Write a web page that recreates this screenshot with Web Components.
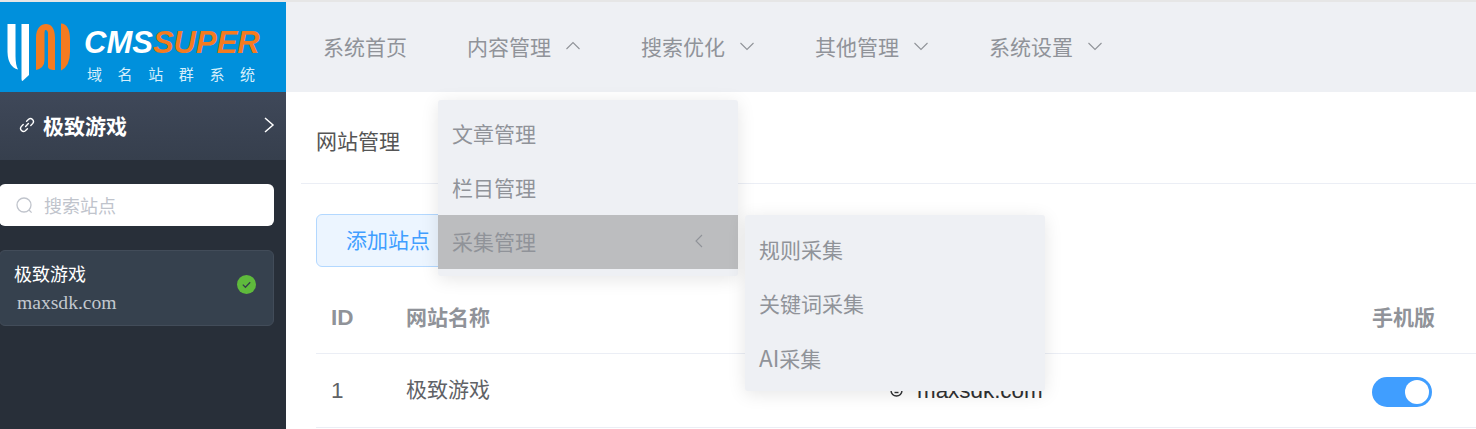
<!DOCTYPE html>
<html lang="zh-CN">
<head>
<meta charset="utf-8">
<title>CMSSUPER 域名站群系统</title>
<style>
html, body { margin: 0; height: 100%; overflow: hidden; background: #fff; }
body { font-family: "Liberation Sans", "Noto Sans CJK SC", sans-serif; }
</style>
</head>
<body>

<cms-shell>
  <brand-logo slot="logo"></brand-logo>
  <site-sidebar slot="side" current="极致游戏">
    <site-card name="极致游戏" domain="maxsdk.com"></site-card>
  </site-sidebar>
  <top-nav slot="nav">
    <nav-item label="系统首页" plain></nav-item>
    <nav-item label="内容管理" open>
      <fly-menu>
        <menu-entry>文章管理</menu-entry>
        <menu-entry>栏目管理</menu-entry>
        <menu-entry active>采集管理
          <fly-menu slot="sub" flat>
            <menu-entry>规则采集</menu-entry>
            <menu-entry>关键词采集</menu-entry>
            <menu-entry><span style="font-size:22.5px">AI</span>采集</menu-entry>
          </fly-menu>
        </menu-entry>
      </fly-menu>
    </nav-item>
    <nav-item label="搜索优化"></nav-item>
    <nav-item label="其他管理"></nav-item>
    <nav-item label="系统设置"></nav-item>
  </top-nav>
  <site-page slot="main" heading="网站管理" action="添加站点">
    <site-table></site-table>
  </site-page>
</cms-shell>

<script>
"use strict";

/* Small helper, every element here just sets its shadow root from a string. */
function shadow(el, html) {
    el.attachShadow({mode: 'open'});
    el.shadowRoot.innerHTML = html;
}

const chevron = (d) => `<svg width="16" height="16" viewBox="0 0 16 16" fill="none" stroke="currentColor" stroke-width="1.1"><path d="${d}"/></svg>`;

class CmsShell extends HTMLElement {
    constructor() {
        super();
        shadow(this, `
<style>
:host { display: block; height: 429px; overflow: hidden; border-top: 2px solid #e6e6e6; box-sizing: border-box; }
.grid { display: grid; grid-template-columns: 286px 1fr; grid-template-rows: 90px 1fr; height: 100%; }
.side { grid-row: 2; overflow: hidden; }
.main { position: relative; overflow: hidden; }
.nav { position: relative; z-index: 5; }
</style>
<div class="grid">
  <div><slot name="logo"></slot></div>
  <div class="nav"><slot name="nav"></slot></div>
  <div class="side"><slot name="side"></slot></div>
  <div class="main"><slot name="main"></slot></div>
</div>`);
    }
}

class BrandLogo extends HTMLElement {
    constructor() {
        super();
        shadow(this, `
<style>
:host { display: flex; height: 90px; background: #0090dc; align-items: flex-start; overflow: hidden; }
svg { flex: none; }
.words { margin: 25px 0 0 13px; }
.name { font: italic bold 31px/31px "Liberation Sans", sans-serif; color: #fff; }
.name span { color: #f57b20; }
.sub { margin: 6px 0 0 3px; font: 15px/20px "Noto Sans CJK SC", sans-serif; letter-spacing: 15.6px; color: #d5eefb; white-space: nowrap; }
</style>
<svg width="71" height="90" viewBox="0 2 71 90">
  <path fill="#fff" d="M7.5 24 H15.500 V56 Q15.500 65 18 69.500 Q8 67 7.500 52 Z"/>
  <path fill="#fff" d="M21.500 24 H29 V75 L22.500 81 Q21.500 81 21.500 79 Z"/>
  <path fill="#f57b20" d="M36 70 V38 C36 28 41 24 46 24 C51 24 55 28 55 38 V70 C50 70 48.500 69 48 67 V34 Q48 30 45.500 30 Q44.500 30 44.500 34 V60 Q44.500 68 36 70 Z"/>
  <path fill="#f57b20" d="M61 23.500 Q70 24 70 40 V52 Q70 66 61 70.500 Z"/>
</svg>
<div class="words">
  <div class="name">CMS<span>SUPER</span></div>
  <div class="sub">域名站群系统</div>
</div>`);
    }
}

class SiteSidebar extends HTMLElement {
    constructor() {
        super();
        shadow(this, `
<style>
:host { display: block; height: 100%; background: #282f39; font-family: "Noto Sans CJK SC", sans-serif; }
.head { display: flex; align-items: center; height: 68px; padding: 0 8px 2px 19px; gap: 8px; box-sizing: border-box;
        background: linear-gradient(#3f4859, #363f4d); color: #fff; font-weight: 700; font-size: 21px; }
.head span { flex: 1; }
.search { display: flex; align-items: center; gap: 11px; height: 42px; margin: 24px 12px 0 -1px; padding-left: 17px; box-sizing: border-box;
          background: #fff; border-radius: 6px; color: #c0c4cc; font-size: 18px; }
.list { margin: 24px 12px 0 -1px; }
svg { flex: none; }
</style>
<div class="head">
  <svg width="16" height="16" viewBox="0 0 16 16" fill="none" stroke="#fff" stroke-width="1.4" stroke-linecap="round">
    <path d="M6.600 9.400 9.400 6.600"/>
    <path d="M7.600 4.200 9.600 2.200a3 3 0 0 1 4.200 4.200l-2 2"/>
    <path d="M8.400 11.800 6.400 13.800a3 3 0 0 1-4.200-4.200l2-2"/>
  </svg>
  <span></span>
  <svg width="16" height="20" viewBox="0 0 16 20" fill="none" stroke="#fff" stroke-width="1.5"><path d="M3 3l8 7-8 7"/></svg>
</div>
<div class="search">
  <svg width="17" height="17" viewBox="0 0 17 17" fill="none" stroke="#c0c4cc" stroke-width="1.3"><circle cx="8" cy="8" r="7"/><path d="M13 13l2.600 2.600"/></svg>
  搜索站点
</div>
<div class="list"><slot></slot></div>`);
        this.shadowRoot.querySelector('.head span').textContent = this.getAttribute('current');
    }
}

class SiteCard extends HTMLElement {
    constructor() {
        super();
        shadow(this, `
<style>
:host { display: flex; align-items: center; justify-content: space-between; height: 76px; padding: 0 17px 0 14px; box-sizing: border-box;
        background: #36414e; border: 1px solid #424c59; border-radius: 6px; }
.name { font: 18px/24px "Noto Sans CJK SC", sans-serif; color: #fff; margin-top: -1px; }
.domain { font: 19.6px/24px "Liberation Serif", serif; color: #c3c8cf; margin: 6px 0 0 3px; }
svg { margin-bottom: 8px; }
</style>
<div>
  <div class="name"></div>
  <div class="domain"></div>
</div>
<svg width="19" height="19" viewBox="0 0 19 19"><circle cx="9.500" cy="9.500" r="9.500" fill="#5fba3c"/><path d="M5.800 9.600l2.600 2.600 4.800-5" fill="none" stroke="#33404a" stroke-width="1.3"/></svg>`);
        this.shadowRoot.querySelector('.name').textContent = this.getAttribute('name');
        this.shadowRoot.querySelector('.domain').textContent = this.getAttribute('domain');
    }
}

class TopNav extends HTMLElement {
    constructor() {
        super();
        shadow(this, `
<style>
:host { display: flex; height: 90px; padding-left: 7px; background: #eef0f4; }
</style>
<slot></slot>`);
    }
}

class NavItem extends HTMLElement {
    constructor() {
        super();
        const open = this.hasAttribute('open');
        const plain = this.hasAttribute('plain');
        const icon = plain ? '' : chevron(open ? 'M1.500 11 8 4.500 14.500 11' : 'M1.500 5 8 11.500 14.500 5');
        shadow(this, `
<style>
:host { display: flex; align-items: center; gap: 14px; height: 90px; box-sizing: border-box; padding: 0 30px 3px 30px; position: relative;
        color: #909399; font: 21px "Noto Sans CJK SC", sans-serif; white-space: nowrap; }
.drop { position: absolute; left: 1px; top: 98px; }
svg { flex: none; }
</style>
<span></span>${icon}
<div class="drop"><slot></slot></div>`);
        this.shadowRoot.querySelector('span').textContent = this.getAttribute('label');
    }
}

class FlyMenu extends HTMLElement {
    constructor() {
        super();
        shadow(this, `
<style>
:host { display: block; width: 300px; box-sizing: border-box; padding: 7px 0; background: #eef0f4; border-radius: 3px;
        box-shadow: 0 3px 18px rgba(0,0,0,.1); }
:host([flat]) { padding: 8.5px 0 5.5px; }
</style>
<slot></slot>`);
    }
}

class MenuEntry extends HTMLElement {
    constructor() {
        super();
        const active = this.hasAttribute('active');
        shadow(this, `
<style>
:host { display: flex; align-items: center; justify-content: space-between; height: 54px; box-sizing: border-box; padding: 0 31px 3px 14px; position: relative;
        color: #909399; font: 21px "Noto Sans CJK SC", "Liberation Sans", sans-serif; }
:host([active]) { background: #bcbdbf; }
.sub { position: absolute; left: 307px; top: 0; }
</style>
<span><slot></slot></span>
${active ? chevron('M11 2 5 8l6 6') : ''}
<div class="sub"><slot name="sub"></slot></div>`);
    }
}

class SitePage extends HTMLElement {
    constructor() {
        super();
        shadow(this, `
<style>
:host { display: block; height: 100%; font-family: "Noto Sans CJK SC", sans-serif; }
.head { display: flex; align-items: center; height: 92px; padding: 4px 0 0 15px; margin-left: 15px; box-sizing: border-box;
        border-bottom: 1.5px solid #ebeef5; font-size: 21px; color: #555; }
.body { padding: 30px 0 0 30px; }
button { display: block; width: 200px; height: 53px; padding: 0 0 3px 29px; text-align: left; background: #ecf5ff; border: 1.5px solid #b3d8ff;
         border-radius: 6px; color: #409eff; font: 21px "Noto Sans CJK SC", sans-serif; }
.table { margin-top: 15px; }
</style>
<div class="head"></div>
<div class="body">
  <button type="button"></button>
  <div class="table"><slot></slot></div>
</div>`);
        this.shadowRoot.querySelector('.head').textContent = this.getAttribute('heading');
        this.shadowRoot.querySelector('button').textContent = this.getAttribute('action');
    }
}

class SiteTable extends HTMLElement {
    constructor() {
        super();
        shadow(this, `
<style>
:host { display: block; font: 21px "Noto Sans CJK SC", "Liberation Sans", sans-serif; color: #606266; }
.row { display: grid; grid-template-columns: 75px 484px 482px 1fr; align-items: center; height: 73px; padding-left: 15px;
       border-bottom: 1.5px solid #ebeef5; }
.th { height: 71px; color: #909399; font-weight: 700; }
.th span { padding-bottom: 4px; }
.th .id { padding-bottom: 0; }
.cell { padding-bottom: 6px; }
.url { display: flex; align-items: center; gap: 14px; color: #303133; font: 22.4px "Liberation Sans", sans-serif; }
.toggle { display: flex; justify-content: flex-end; box-sizing: border-box; width: 60px; height: 30px; margin-top: 2px; padding: 3px; background: #409eff; border-radius: 15px; }
.toggle i { width: 24px; height: 24px; background: #fff; border-radius: 50%; }
.id { font-family: "Liberation Sans", sans-serif; font-size: 22.5px; }
</style>
<div class="row th"><span class="id">ID</span><span>网站名称</span><span></span><span>手机版</span></div>
<div class="row">
  <span class="id">1</span>
  <span class="cell">极致游戏</span>
  <span class="url">
    <svg width="13" height="13" viewBox="0 0 13 13" fill="none" stroke="#303133" stroke-width="1.4"><circle cx="6.500" cy="6.500" r="5.500"/><path d="M4.500 8.500h4"/></svg>
    maxsdk.com
  </span>
  <span class="toggle"><i></i></span>
</div>`);
    }
}

customElements.define('cms-shell', CmsShell);
customElements.define('brand-logo', BrandLogo);
customElements.define('site-sidebar', SiteSidebar);
customElements.define('site-card', SiteCard);
customElements.define('top-nav', TopNav);
customElements.define('nav-item', NavItem);
customElements.define('fly-menu', FlyMenu);
customElements.define('menu-entry', MenuEntry);
customElements.define('site-page', SitePage);
customElements.define('site-table', SiteTable);
</script>
</body>
</html>
